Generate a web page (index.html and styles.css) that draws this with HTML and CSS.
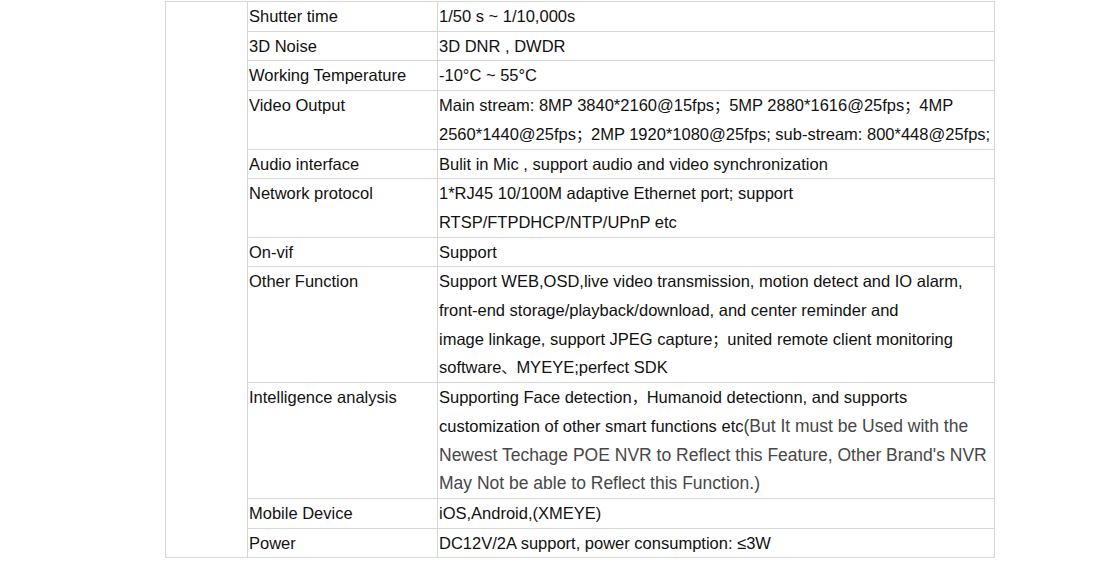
FILE: index.html
```html
<!DOCTYPE html>
<html>
<head>
<meta charset="utf-8">
<link rel="stylesheet" href="styles.css">
</head>
<body>
<table class="spec">
  <colgroup>
    <col class="c0"><col class="c1"><col class="c2">
  </colgroup>
  <tbody>
    <tr><td class="blank" rowspan="11"></td><td>Shutter time</td><td>1/50 s ~ 1/10,000s</td></tr>
    <tr><td>3D Noise</td><td>3D DNR , DWDR</td></tr>
    <tr><td>Working Temperature</td><td>-10°C ~ 55°C</td></tr>
    <tr><td>Video Output</td><td>Main stream: 8MP 3840*2160@15fps<span class="cjk">；</span>5MP 2880*1616@25fps<span class="cjk">；</span>4MP<br>2560*1440@25fps<span class="cjk">；</span>2MP 1920*1080@25fps; sub-stream: 800*448@25fps;</td></tr>
    <tr><td>Audio interface</td><td>Bulit in Mic , support audio and video synchronization</td></tr>
    <tr><td>Network protocol</td><td>1*RJ45 10/100M adaptive Ethernet port; support<br>RTSP/FTPDHCP/NTP/UPnP etc</td></tr>
    <tr><td>On-vif</td><td>Support</td></tr>
    <tr><td>Other Function</td><td>Support WEB,OSD,live video transmission, motion detect and IO alarm,<br>front-end storage/playback/download, and center reminder and<br>image linkage, support JPEG capture<span class="cjk">；</span>united remote client monitoring<br>software<span class="cjk">、</span>MYEYE;perfect SDK</td></tr>
    <tr><td>Intelligence analysis</td><td>Supporting Face detection<span class="cjk">，</span>Humanoid detectionn, and supports<br>customization of other smart functions etc<span class="note">(But It must be Used with the<br>Newest Techage POE NVR to Reflect this Feature, Other Brand's NVR<br>May Not be able to Reflect this Function.)</span></td></tr>
    <tr><td>Mobile Device</td><td>iOS,Android,(XMEYE)</td></tr>
    <tr><td>Power</td><td>DC12V/2A support, power consumption: ≤3W</td></tr>
  </tbody>
</table>
</body>
</html>
```
FILE: styles.css
```css
html, body {
  margin: 0;
  padding: 0;
  background: #fff;
}
body {
  padding-top: 1px;
  font-family: "Liberation Sans", Arial, "Noto Sans CJK SC", sans-serif;
  font-size: 16.5px;
  color: #111;
}
.spec {
  margin-left: 165px;
  border-collapse: collapse;
  table-layout: fixed;
  width: 829px;
}
.c0 { width: 82px; }
.c1 { width: 190px; }
.c2 { width: 557px; }
.spec td {
  border: 1px solid #d6d6d6;
  padding: 0 0 0 1px;
  line-height: 28.7px;
  vertical-align: top;
  white-space: nowrap;
  overflow: hidden;
}
.cjk {
  font-family: "Noto Sans CJK SC", sans-serif;
  font-size: 15px;
}
.note {
  color: #474747;
  font-size: 17.5px;
}
```
